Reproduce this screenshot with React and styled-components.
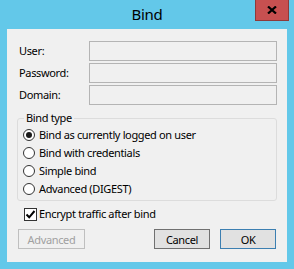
import React from "react";
import styled, { createGlobalStyle } from "styled-components";

const Global = createGlobalStyle`
  html, body { margin: 0; padding: 0; }
  body { background: #63c8e9; font-family: "Noto Sans", "Segoe UI", sans-serif; }
  * { box-sizing: border-box; }
`;

const Window = styled.div`
  width: 294px;
  height: 269px;
  background: #63c8e9;
  display: flex;
  flex-direction: column;
`;

const TitleBar = styled.div`
  height: 29px;
  display: grid;
  grid-template-columns: 1fr auto 1fr;
  align-items: start;
`;

const Title = styled.div`
  grid-column: 2;
  font-size: 15px;
  letter-spacing: -0.3px;
  line-height: 29px;
  color: #000;
`;

const CloseButton = styled.div`
  grid-column: 3;
  justify-self: end;
  margin-right: 5px;
  width: 34px;
  height: 21px;
  background: #c75050;
  border: 1px solid #8e3a3a;
  border-top: none;
  display: flex;
  align-items: center;
  justify-content: center;
`;

const Client = styled.div`
  margin: 0 7px;
  height: 233px;
  background: #f0f0f0;
  padding: 12px 10px 0 10px;
  display: flex;
  flex-direction: column;
  font-size: 11px;
  letter-spacing: -0.35px;
  color: #000;
`;

const FormGrid = styled.div`
  display: grid;
  grid-template-columns: 72px 188px;
  grid-auto-rows: 20px;
  row-gap: 2px;
  align-items: center;
`;

const Label = styled.label`
  padding-left: 2px;
  line-height: 16px;
`;

const TextBox = styled.div`
  height: 20px;
  border: 1px solid #b4b4b4;
  background: #f0f0f0;
`;

const GroupBox = styled.fieldset`
  margin: 5px 0 0 0;
  width: 260px;
  padding: 0 0 2px 0;
  border: 1px solid #dcdcdc;
  border-radius: 3px;
  display: flex;
  flex-direction: column;
`;

const Legend = styled.legend`
  margin-left: 6px;
  padding: 0 2px;
  line-height: 16px;
  font-size: 11px;
`;

const OptionRow = styled.div`
  height: 18px;
  display: flex;
  align-items: center;
  padding-left: ${(p) => p.$indent}px;
  gap: ${(p) => p.$gap}px;
  line-height: 16px;
  white-space: nowrap;
`;

const Radio = styled.span`
  width: 12px;
  height: 12px;
  border-radius: 50%;
  border: 1px solid #333;
  background: #fff;
  display: flex;
  align-items: center;
  justify-content: center;
  flex: none;
  &::after {
    content: "";
    width: 6px;
    height: 6px;
    border-radius: 50%;
    background: ${(p) => (p.$checked ? "#1a1a1a" : "transparent")};
  }
`;

const CheckBox = styled.span`
  width: 13px;
  height: 13px;
  border: 1px solid #333;
  background: #fff;
  display: flex;
  align-items: center;
  justify-content: center;
  flex: none;
`;

const CheckRow = styled(OptionRow)`
  margin-top: 4px;
`;

const ButtonRow = styled.div`
  margin-top: 6px;
  display: flex;
  align-items: center;
  padding-left: 1px;
  padding-right: 1px;
  gap: 10px;
`;

const Spacer = styled.div`
  flex: 1;
`;

const Button = styled.div`
  height: 20px;
  width: ${(p) => p.$w}px;
  display: flex;
  align-items: center;
  justify-content: center;
  border: 1px solid ${(p) => (p.$default ? "#3c7fb1" : p.$disabled ? "#bfbfbf" : "#707070")};
  background: ${(p) => (p.$disabled ? "#f0f0f0" : "#e1e1e1")};
  color: ${(p) => (p.$disabled ? "#a0a0a0" : "#000")};
`;

const radios = [
  { label: "Bind as currently logged on user", checked: true },
  { label: "Bind with credentials" },
  { label: "Simple bind" },
  { label: "Advanced (DIGEST)" },
];

export default function App() {
  return (
    <>
      <Global />
      <Window>
        <TitleBar>
          <Title>Bind</Title>
          <CloseButton>
            <svg width="10" height="8" viewBox="0 0 10 8">
              <path d="M1 0.5 L9 7.5 M9 0.5 L1 7.5" stroke="#000" strokeWidth="2.2" />
            </svg>
          </CloseButton>
        </TitleBar>
        <Client>
          <FormGrid>
            <Label>User:</Label>
            <TextBox />
            <Label>Password:</Label>
            <TextBox />
            <Label>Domain:</Label>
            <TextBox />
          </FormGrid>
          <GroupBox>
            <Legend>Bind type</Legend>
            {radios.map((r) => (
              <OptionRow key={r.label} $indent={5} $gap={4}>
                <Radio $checked={r.checked} />
                <span>{r.label}</span>
              </OptionRow>
            ))}
          </GroupBox>
          <CheckRow $indent={7} $gap={2}>
            <CheckBox>
              <svg width="11" height="11" viewBox="0 0 11 11">
                <path d="M1.5 5.5 L4.2 8.3 L9.5 2" stroke="#000" strokeWidth="2" fill="none" />
              </svg>
            </CheckBox>
            <span>Encrypt traffic after bind</span>
          </CheckRow>
          <ButtonRow>
            <Button $w={67} $disabled>Advanced</Button>
            <Spacer />
            <Button $w={56}>Cancel</Button>
            <Button $w={56} $default>OK</Button>
          </ButtonRow>
        </Client>
      </Window>
    </>
  );
}
